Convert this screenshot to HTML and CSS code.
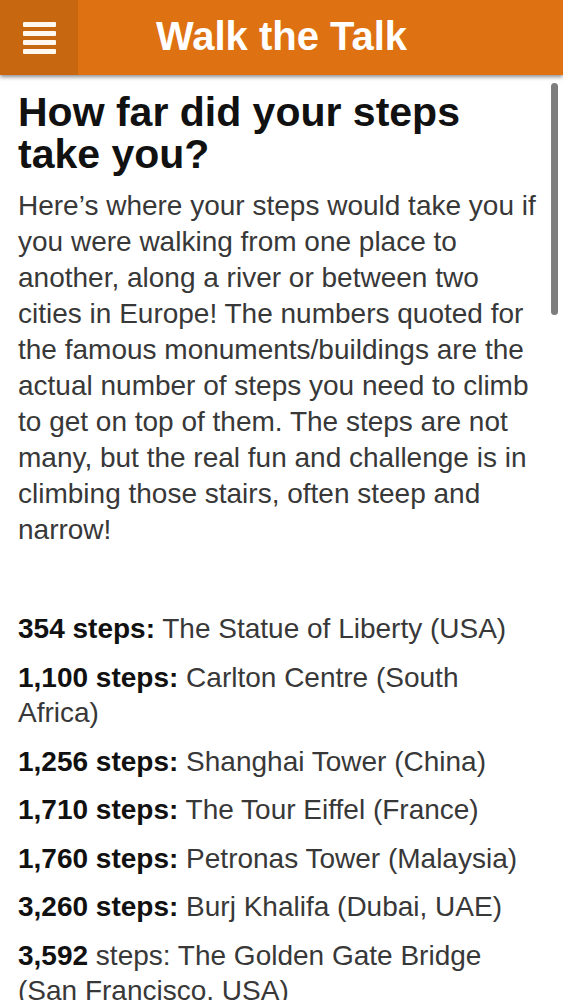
FILE: index.html
```html
<!DOCTYPE html>
<html lang="en">
<head>
<meta charset="utf-8">
<title>Walk the Talk</title>
<link rel="stylesheet" href="styles.css">
</head>
<body>
<header class="topbar">
  <button class="menu-btn" aria-label="Menu">
    <svg class="menu-icon" width="33" height="32" viewBox="0 0 33 32">
      <rect x="0" y="0" width="33" height="5" rx="1"/>
      <rect x="0" y="9" width="33" height="5" rx="1"/>
      <rect x="0" y="18" width="33" height="5" rx="1"/>
      <rect x="0" y="27" width="33" height="5" rx="1"/>
    </svg>
  </button>
  <h1 class="title">Walk the Talk</h1>
</header>
<main class="content">
  <h2 class="headline">How far did your steps take you?</h2>
  <p class="intro">Here’s where your steps would take you if you were walking from one place to another, along a river or between two cities in Europe! The numbers quoted for the famous monuments/buildings are the actual number of steps you need to climb to get on top of them. The steps are not many, but the real fun and challenge is in climbing those stairs, often steep and narrow!</p>
  <ul class="steps-list">
    <li><b>354 steps:</b> The Statue of Liberty (USA)</li>
    <li><b>1,100 steps:</b> Carlton Centre (South Africa)</li>
    <li><b>1,256 steps:</b> Shanghai Tower (China)</li>
    <li><b>1,710 steps:</b> The Tour Eiffel (France)</li>
    <li><b>1,760 steps:</b> Petronas Tower (Malaysia)</li>
    <li><b>3,260 steps:</b> Burj Khalifa (Dubai, UAE)</li>
    <li><b>3,592</b> steps: The Golden Gate Bridge (San Francisco, USA)</li>
  </ul>
</main>
<div class="scroll-thumb"></div>
</body>
</html>
```

FILE: styles.css
```css
html, body {
  margin: 0;
  padding: 0;
  height: 1000px;
  overflow: hidden;
  background: #ffffff;
  font-family: "Liberation Sans", Arial, sans-serif;
}

.topbar {
  display: grid;
  grid-template-columns: 1fr;
  height: 75px;
  background: #de7212;
  box-shadow: 0 2px 4px rgba(0, 0, 0, 0.45);
  position: relative;
  z-index: 2;
}

.menu-btn {
  grid-area: 1 / 1;
  justify-self: start;
  width: 78px;
  height: 75px;
  margin: 0;
  padding: 0 0 0 23px;
  border: none;
  background: #c7670f;
  display: flex;
  align-items: center;
}

.menu-icon rect {
  fill: #fff8ee;
}

.title {
  grid-area: 1 / 1;
  justify-self: center;
  margin: 0;
  font-size: 40px;
  line-height: 72px;
  font-weight: 700;
  color: #ffffff;
}

.content {
  padding: 16px 18px 0 18px;
  color: #383838;
}

.headline {
  margin: 0;
  font-size: 41px;
  line-height: 42px;
  font-weight: 700;
  color: #111111;
}

.intro {
  margin: 13px 0 0 0;
  font-size: 28px;
  line-height: 36px;
}

.steps-list {
  list-style: none;
  margin: 63px 0 0 0;
  padding: 0;
  max-width: 512px;
  font-size: 28px;
  line-height: 35.5px;
}

.steps-list li {
  margin: 0 0 13px 0;
}

.steps-list b {
  color: #111111;
}

.scroll-thumb {
  position: absolute;
  top: 83px;
  left: 551px;
  width: 7px;
  height: 232px;
  border-radius: 4px;
  background: #7d7d7d;
}
```
